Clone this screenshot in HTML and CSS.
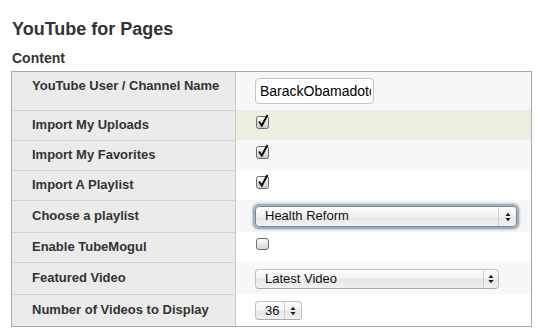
FILE: index.html
```
<!DOCTYPE html>
<html>
<head>
<meta charset="utf-8">
<link rel="stylesheet" href="styles.css">
</head>
<body>
<div class="page">
  <h1 class="title">YouTube for Pages</h1>
  <h2 class="section">Content</h2>
  <div class="form">
    <div class="row row-first odd">
      <div class="label">YouTube User / Channel Name</div>
      <div class="value value-input"><input class="text" type="text" value="BarackObamadotcom"></div>
    </div>
    <div class="row hover">
      <div class="label">Import My Uploads</div>
      <div class="value value-check">
        <svg class="check" width="14" height="16" viewBox="0 0 14 16"><defs><linearGradient id="g1" x1="0" y1="0" x2="0" y2="1"><stop offset="0" stop-color="#fdfdfd"/><stop offset="1" stop-color="#c9c9c9"/></linearGradient></defs><rect x="0.5" y="3.5" width="12" height="12" rx="2" fill="url(#g1)" stroke="#6b6b6b"/><path d="M3 8.5 L5.8 12.5 L11.5 2" fill="none" stroke="#111" stroke-width="2"/></svg>
      </div>
    </div>
    <div class="row odd">
      <div class="label">Import My Favorites</div>
      <div class="value value-check">
        <svg class="check" width="14" height="16" viewBox="0 0 14 16"><defs><linearGradient id="g2" x1="0" y1="0" x2="0" y2="1"><stop offset="0" stop-color="#fdfdfd"/><stop offset="1" stop-color="#c9c9c9"/></linearGradient></defs><rect x="0.5" y="3.5" width="12" height="12" rx="2" fill="url(#g2)" stroke="#6b6b6b"/><path d="M3 8.5 L5.8 12.5 L11.5 2" fill="none" stroke="#111" stroke-width="2"/></svg>
      </div>
    </div>
    <div class="row even">
      <div class="label">Import A Playlist</div>
      <div class="value value-check">
        <svg class="check" width="14" height="16" viewBox="0 0 14 16"><defs><linearGradient id="g3" x1="0" y1="0" x2="0" y2="1"><stop offset="0" stop-color="#fdfdfd"/><stop offset="1" stop-color="#c9c9c9"/></linearGradient></defs><rect x="0.5" y="3.5" width="12" height="12" rx="2" fill="url(#g3)" stroke="#6b6b6b"/><path d="M3 8.5 L5.8 12.5 L11.5 2" fill="none" stroke="#111" stroke-width="2"/></svg>
      </div>
    </div>
    <div class="row row-tall odd">
      <div class="label label-mid">Choose a playlist</div>
      <div class="value value-select">
        <div class="select select-focus select-wide">
          <span class="select-text">Health Reform</span>
          <span class="select-arrow arrow-wide"><svg width="6" height="10" viewBox="0 0 6 10"><polygon points="0.5,4 3,0.8 5.5,4" fill="#1a1a1a"/><polygon points="0.5,6 3,9.2 5.5,6" fill="#1a1a1a"/></svg></span>
        </div>
      </div>
    </div>
    <div class="row even">
      <div class="label">Enable TubeMogul</div>
      <div class="value value-check">
        <svg class="check" width="14" height="16" viewBox="0 0 14 16"><defs><linearGradient id="g4" x1="0" y1="0" x2="0" y2="1"><stop offset="0" stop-color="#fdfdfd"/><stop offset="1" stop-color="#d4d4d4"/></linearGradient></defs><rect x="0.5" y="3.5" width="12" height="11" rx="2.5" fill="url(#g4)" stroke="#6b6b6b"/></svg>
      </div>
    </div>
    <div class="row row-tall odd">
      <div class="label label-mid">Featured Video</div>
      <div class="value value-select">
        <div class="select select-mid">
          <span class="select-text">Latest Video</span>
          <span class="select-arrow"><svg width="6" height="10" viewBox="0 0 6 10"><polygon points="0.5,4 3,0.8 5.5,4" fill="#1a1a1a"/><polygon points="0.5,6 3,9.2 5.5,6" fill="#1a1a1a"/></svg></span>
        </div>
      </div>
    </div>
    <div class="row row-tall even">
      <div class="label label-mid">Number of Videos to Display</div>
      <div class="value value-select">
        <div class="select select-small">
          <span class="select-text">36</span>
          <span class="select-arrow arrow-small"><svg width="6" height="10" viewBox="0 0 6 10"><polygon points="0.5,4 3,0.8 5.5,4" fill="#1a1a1a"/><polygon points="0.5,6 3,9.2 5.5,6" fill="#1a1a1a"/></svg></span>
        </div>
      </div>
    </div>
  </div>
</div>
</body>
</html>
```
FILE: styles.css
```
html, body {
  margin: 0;
  padding: 0;
  background: #fff;
}
body {
  font-family: "Liberation Sans", Arial, sans-serif;
  color: #333;
}
.page {
  padding: 18px 0 0 11px;
}
.title {
  margin: 0 0 0 1px;
  font-size: 18px;
  line-height: 22px;
  font-weight: bold;
  color: #333;
}
.section {
  margin: 10px 0 4px 1px;
  font-size: 14px;
  line-height: 17px;
  font-weight: bold;
  color: #333;
}
.form {
  width: 519px;
  border: 1px solid #a9a9a9;
}
.row {
  display: flex;
  height: 30px;
}
.row-first {
  height: 38px;
}
.row-tall {
  height: 32px;
}
.label {
  width: 203px;
  flex: none;
  padding: 6px 0 0 20px;
  background: #ebebeb;
  border-right: 1px solid #c9c9c9;
  border-top: 1px solid #d2d2d2;
  font-size: 13px;
  line-height: 16px;
  font-weight: bold;
  color: #333;
}
.label-mid {
  padding-top: 7px;
}
.row-first .label,
.row-first .value {
  border-top: none;
}
.value {
  flex: 1;
  display: flex;
  align-items: flex-start;
  padding-left: 19px;
  border-top: 1px solid transparent;
}
.odd .value {
  background: #f7f7f7;
}
.even .value {
  background: #fff;
}
.hover .value {
  background: #eceedf;
}
.value-input {
  padding-top: 6px;
}
.value-check {
  padding-top: 2px;
}
.value-check .check {
  margin-left: 1px;
  overflow: visible;
}
.value-select {
  align-items: center;
}
.text {
  box-sizing: border-box;
  width: 119px;
  height: 26px;
  margin: 0;
  padding: 0 2px 0 4px;
  border: 1px solid #c6c6c6;
  border-radius: 4px;
  background: #fff;
  font-family: "Liberation Sans", Arial, sans-serif;
  font-size: 14px;
  color: #000;
  outline: none;
}
.select {
  box-sizing: border-box;
  display: flex;
  align-items: stretch;
  height: 20px;
  border: 1px solid #c2c2c2;
  border-bottom-color: #aaa;
  border-radius: 4px;
  background: linear-gradient(#fdfdfd, #f1f1f1 50%, #e6e6e6 51%, #f0f0f0);
  font-size: 13px;
  color: #111;
}
.select-text {
  flex: 1;
  padding-left: 9px;
  line-height: 18px;
  white-space: nowrap;
  overflow: hidden;
}
.select-arrow {
  flex: none;
  width: 14px;
  display: flex;
  align-items: center;
  justify-content: center;
  border-left: 1px solid #cfcfcf;
}
.select-wide {
  width: 262px;
  height: 21px;
  border-color: #7a8799;
  box-shadow: 0 0 0 2px #a3afbf, 0 0 2px 3px rgba(130, 145, 165, 0.45);
}
.arrow-wide {
  width: 17px;
}
.select-mid {
  width: 244px;
}
.select-small {
  width: 47px;
  height: 19px;
}
.select-small .select-text {
  line-height: 17px;
  padding-left: 9px;
}
.arrow-small {
  width: 16px;
}
```
